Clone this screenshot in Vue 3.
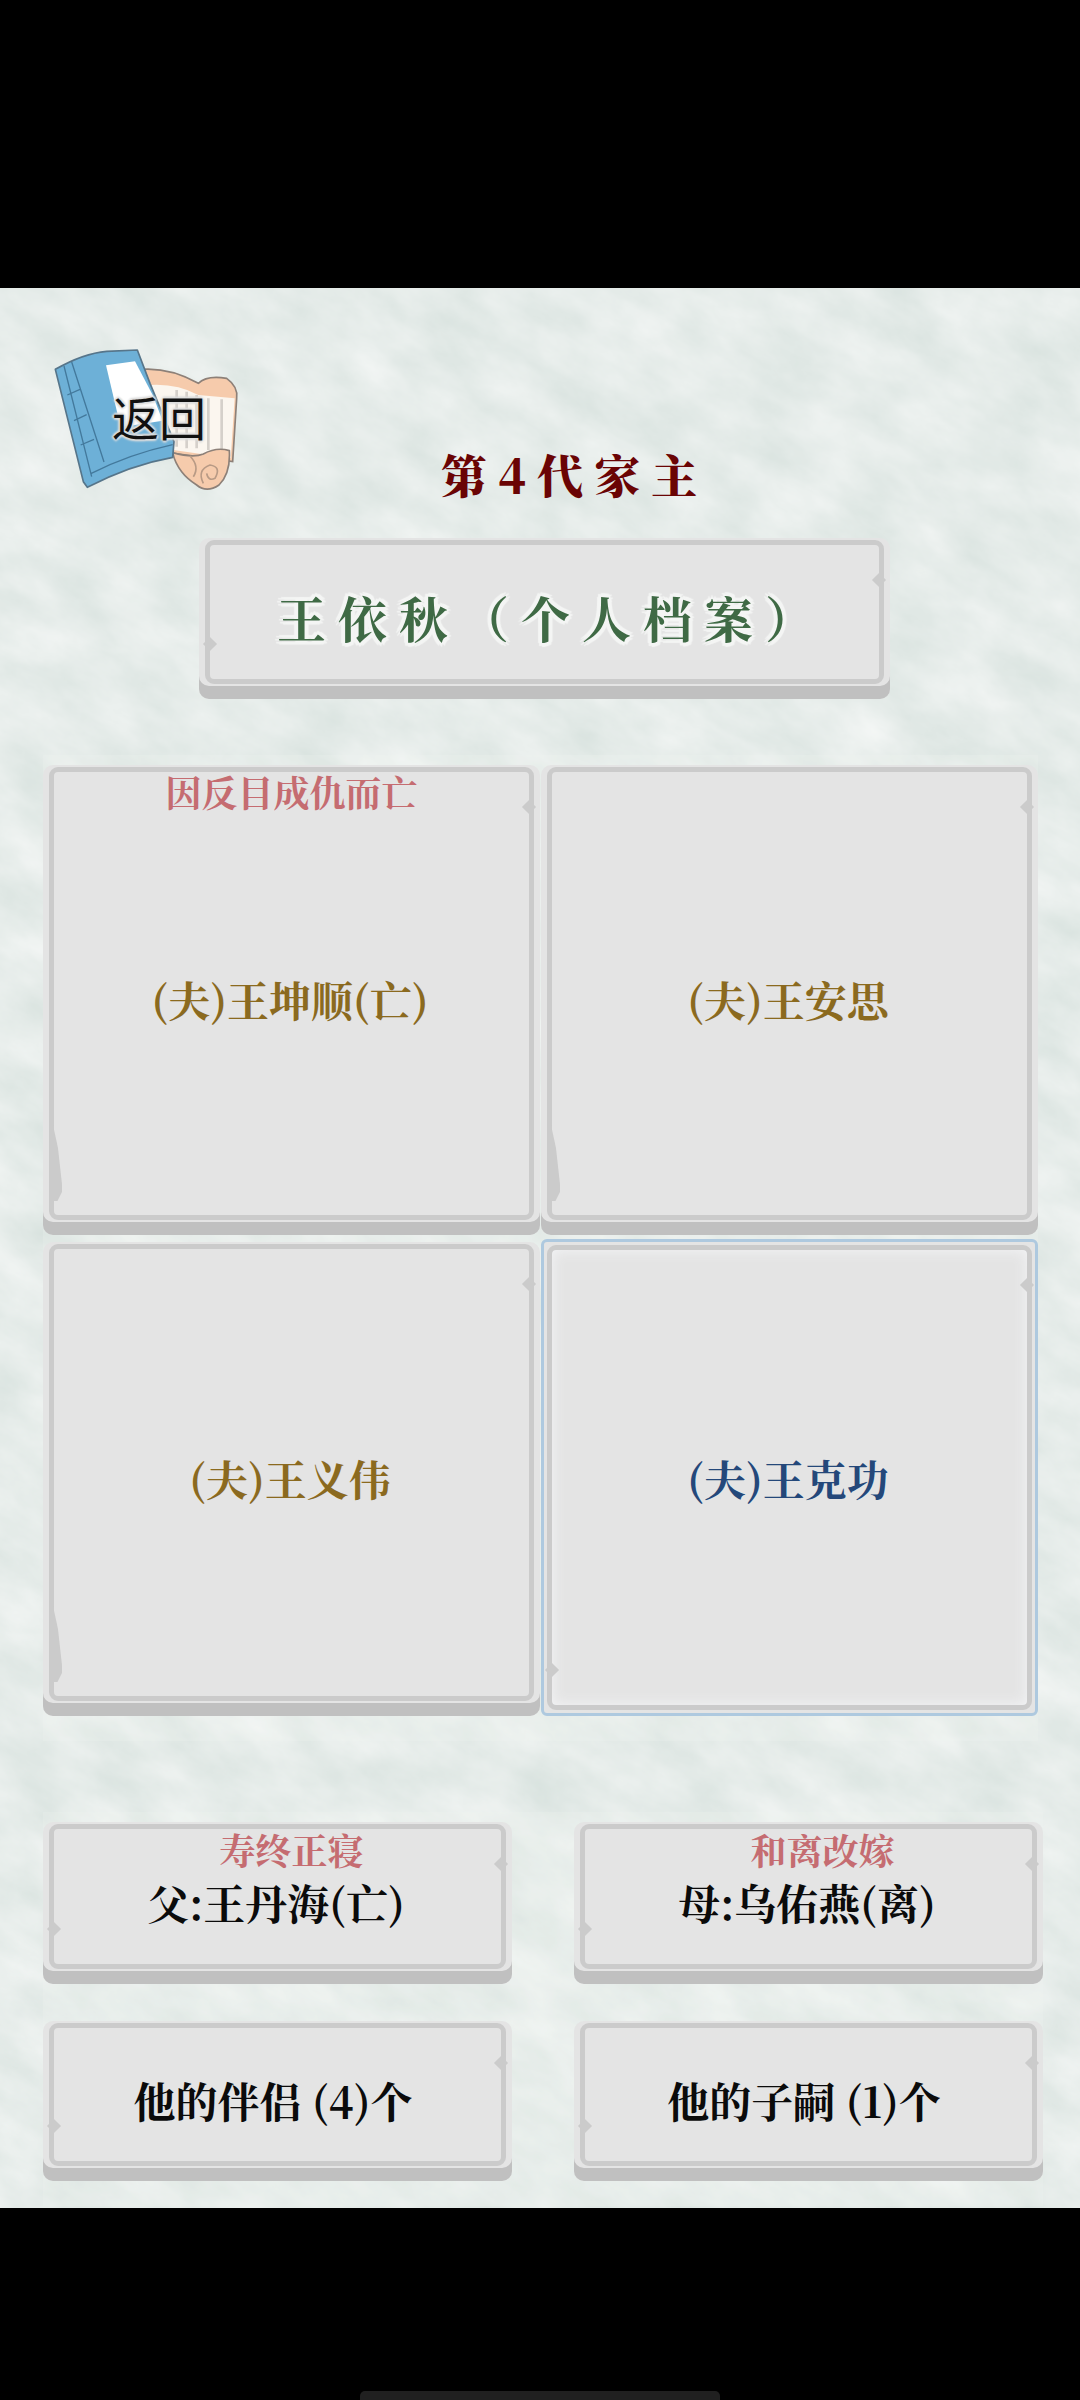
<template>
	<div class="phone">
		<main class="screen">
			<svg class="paper" width="1080" height="1920" aria-hidden="true">
				<filter id="marble" filterUnits="userSpaceOnUse" x="-700" y="-700" width="2500" height="3300" color-interpolation-filters="sRGB">
					<feTurbulence type="fractalNoise" baseFrequency="0.013 0.024" numOctaves="6" seed="23" />
					<feColorMatrix type="matrix" values="0.11 0 0 0 0.845  0.08 0 0 0 0.885  0.09 0 0 0 0.87  0 0 0 0 1" />
				</filter>
				<rect x="-700" y="-700" width="2500" height="3300" filter="url(#marble)" transform="rotate(28 540 960)" />
			</svg>

			<header class="top">
				<button class="back" type="button">
					<svg class="back-art" viewBox="0 0 690 510" width="230" height="170" aria-hidden="true">
						<!-- scroll behind the book -->
						<path d="M335 118 Q420 112 505 160 Q530 135 590 145 Q625 170 620 205 L608 395 L430 370 Z" fill="#f6cbac" stroke="#8d8078" stroke-width="5" />
						<path d="M360 165 Q440 160 505 195 L614 205 L602 385 L430 360 Z" fill="#fbf6ef" />
						<path d="M440 180V350M470 185V355M500 195V355M535 205V360M575 208V365" stroke="#d5d0ca" stroke-width="8" />
						<path d="M428 368 Q490 385 520 372 Q560 350 598 362 Q602 430 567 465 Q530 490 500 465 Q470 445 455 425 Q435 400 428 368 Z" fill="#f6cbac" stroke="#8d8078" stroke-width="5" />
						<path d="M480 378 Q510 410 490 440 M520 460 Q500 420 540 405 Q575 410 555 445 Q535 455 530 430" fill="none" stroke="#b89a85" stroke-width="5" />
						<!-- book cover -->
						<path d="M76 118 Q160 70 230 64 L322 60 L360 160 L432 335 L428 382 Q300 405 172 472 L160 455 Z" fill="#6db0d7" stroke="#56758a" stroke-width="5" stroke-linejoin="round" />
						<path d="M102 108 L185 440 M125 96 L222 396 M112 195 L150 178 M132 272 L170 254 M152 345 L192 328 M184 430 Q300 372 428 344" fill="none" stroke="#43799c" stroke-width="4" />
						<path d="M228 106 L315 94 L368 195 L398 272 L272 292 Z" fill="#fff" />
					</svg>
					<span class="back-label">返回</span>
				</button>
				<h1 class="generation">第4代家主</h1>
			</header>

			<section class="banner card">
				<div class="card-inner">
					<span class="banner-text">王依秋（个人档案）</span>
				</div>
			</section>

			<section class="spouses">
				<div v-for="s in spouses" :key="s.name" class="card" :class="{ selected: s.selected }">
					<div class="card-inner" :class="{ wedge: !s.selected }">
						<span v-if="s.note" class="note note-top">{{ s.note }}</span>
						<span class="name" :class="s.selected ? 'blue' : 'gold'">{{ s.name }}</span>
					</div>
				</div>
			</section>

			<section class="family">
				<div v-for="f in family" :key="f.name" class="card">
					<div class="card-inner" :class="{ 'count-row': !f.note }">
						<span v-if="f.note" class="note note-small">{{ f.note }}</span>
						<span class="name">{{ f.name }}</span>
					</div>
				</div>
			</section>
		</main>
		<div class="nav-pill"></div>
	</div>
</template>

<script setup>
const spouses = [
	{ name: '(夫)王坤顺(亡)', note: '因反目成仇而亡' },
	{ name: '(夫)王安思' },
	{ name: '(夫)王义伟' },
	{ name: '(夫)王克功', selected: true },
]

const family = [
	{ name: '父:王丹海(亡)', note: '寿终正寝' },
	{ name: '母:乌佑燕(离)', note: '和离改嫁' },
	{ name: '他的伴侣 (4)个' },
	{ name: '他的子嗣 (1)个' },
]
</script>

<style>
html, body {
	margin: 0;
	background: #000;
}
</style>

<style scoped>
.phone {
	position: relative;
	width: 1080px;
	height: 2400px;
	padding-top: 288px;
	box-sizing: border-box;
	overflow: hidden;
	background: #000;
	font-family: "Noto Serif CJK SC", "Liberation Serif", "Noto Sans CJK SC", serif;
}

.screen {
	position: relative;
	height: 1920px;
	overflow: hidden;
}

.paper {
	position: absolute;
	inset: 0;
}

.top {
	position: relative;
	display: flex;
	align-items: flex-start;
	height: 250px;
	padding: 42px 0 0 30px;
	box-sizing: border-box;
}

.back {
	position: relative;
	flex: none;
	width: 230px;
	height: 170px;
	padding: 0;
	border: 0;
	background: none;
}

.back-art {
	display: block;
	filter: blur(0.7px);
}

.back-label {
	position: absolute;
	left: 82px;
	top: 54px;
	font-family: "Noto Sans CJK SC", sans-serif;
	font-size: 47px;
	line-height: 64px;
	color: #111;
	white-space: nowrap;
	text-shadow: 2px 0 2px #ddd, -2px 0 2px #ddd, 0 2px 2px #ddd, 0 -2px 2px #ddd;
}

.generation {
	margin: 113px 0 0 181px;
	font-size: 46px;
	font-weight: 900;
	line-height: 60px;
	letter-spacing: 11px;
	color: #6a0404;
	white-space: nowrap;
}

.card {
	position: relative;
	box-sizing: border-box;
	display: flex;
	padding: 2px 6px 15px;
	border-radius: 10px;
	background: #e4e4e4;
	box-shadow: inset 0 -13px 0 #c0c0c0;
}

.card-inner {
	position: relative;
	flex: 1;
	display: flex;
	align-items: center;
	justify-content: center;
	padding: 10px 3px 0 0;
	border: 5px solid #cbcbcb;
	border-radius: 9px;
	text-align: center;
}

.card-inner.count-row {
	padding-right: 9px;
}

/* little notches the frame has on its right and left sides */
.card-inner::before,
.card-inner::after {
	content: '';
	position: absolute;
	width: 10px;
	height: 10px;
	background: #cbcbcb;
	transform: rotate(45deg);
}

.card-inner::before {
	right: -5px;
	top: 30px;
}

.card-inner::after {
	left: -5px;
	bottom: 30px;
}

.card-inner.wedge::after {
	left: -1px;
	bottom: 14px;
	width: 9px;
	height: 76px;
	transform: none;
	clip-path: polygon(0 0, 55% 30%, 100% 78%, 100% 88%, 50% 100%, 0 100%);
}

.banner {
	width: 691px;
	height: 161px;
	margin-left: 199px;
}

.banner-text {
	margin-left: 17px;
	font-size: 49px;
	font-weight: 700;
	letter-spacing: 12px;
	color: #3f6a45;
	white-space: nowrap;
	text-shadow: 4px 0 1px #f4f5f4, -4px 0 1px #f4f5f4, 0 4px 1px #f4f5f4, 0 -4px 1px #f4f5f4,
		3px 3px 1px #f4f5f4, -3px 3px 1px #f4f5f4, 3px -3px 1px #f4f5f4, -3px -3px 1px #f4f5f4;
}

.spouses {
	position: relative;
	display: grid;
	width: 995px;
	grid-template-columns: 497px 497px;
	grid-template-rows: 470px 474px;
	gap: 7px 1px;
	margin: 66px 0 0 43px;
}

/* the card art leaves a pale haze on the paper around each block */
.spouses::before,
.family::before {
	content: '';
	position: absolute;
	inset: -10px 0 -25px;
	background: rgba(240, 244, 241, 0.22);
}

.selected {
	margin-top: -3px;
	padding: 3px;
	border: 3px solid #aec9df;
	border-radius: 6px;
	box-shadow: none;
}

.selected .card-inner {
	padding-top: 0;
	box-shadow: inset 0 0 14px #f4f5f7;
}

.name {
	font-size: 42px;
	font-weight: 700;
	color: #0b0b0b;
	white-space: nowrap;
}

.gold {
	color: #8b6a1f;
}

.blue {
	color: #24487a;
}

.note {
	position: absolute;
	font-size: 36px;
	font-weight: 700;
	line-height: 40px;
	color: #c56c71;
	white-space: nowrap;
}

.note-top {
	top: 0;
	left: 0;
	right: 0;
}

.note-small {
	top: 1px;
	left: 28px;
	right: 0;
}

.family {
	position: relative;
	display: grid;
	width: 1000px;
	grid-template-columns: 469px 469px;
	grid-template-rows: 162px 160px;
	gap: 37px 62px;
	margin: 106px 0 0 43px;
}

.nav-pill {
	position: absolute;
	left: 360px;
	bottom: 0;
	width: 360px;
	height: 9px;
	border-radius: 5px 5px 0 0;
	background: #202020;
}
</style>
